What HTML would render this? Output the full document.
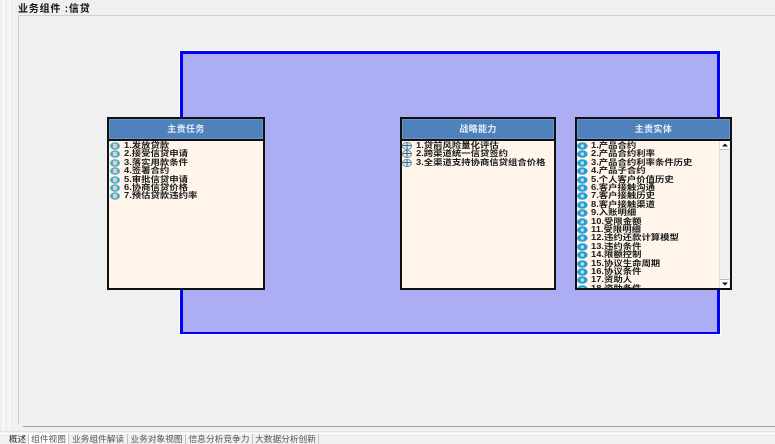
<!DOCTYPE html>
<html><head><meta charset="utf-8">
<style>
html,body{margin:0;padding:0;background:#f0f0f0;}
body{width:775px;height:444px;position:relative;overflow:hidden;font-family:"Liberation Sans","Noto Sans CJK SC",sans-serif;color:#111;}
.a{position:absolute;}
.title{left:18px;top:5px;font-size:10px;line-height:10px;font-weight:bold;white-space:nowrap;letter-spacing:.8px;filter:blur(.3px);}
.panel{position:absolute;top:117px;height:173px;box-sizing:border-box;border:2px solid #111;background:#fff5eb;overflow:hidden;}
.head{height:20px;background:#4f81bd;border-bottom:2px solid #111;color:#e8eef6;text-align:center;font-size:9px;line-height:20px;font-weight:bold;letter-spacing:.4px;box-shadow:inset 0 0 0 1px #6a94c8;}
.row{position:absolute;left:0;height:8.4px;width:100%;white-space:nowrap;font-size:8px;line-height:8.4px;font-weight:bold;color:#1a1a1a;}
.row svg{position:absolute;left:0;top:0;}
.row span{position:absolute;left:14px;top:0;transform:scaleX(1.17);transform-origin:0 50%;filter:blur(.25px);}
.p1 .row svg{left:1px;}
.p1 .row span{left:15px;}
.p3 .row span{left:13.5px;}
.sb{position:absolute;right:0;top:22px;width:10px;bottom:0;background:#f0f0f0;border-left:1px solid #ddd;}
.tab{position:absolute;top:434px;height:10px;box-sizing:border-box;font-size:8.7px;line-height:10px;text-align:center;color:#555;border-right:1px solid #c4c4c4;background:#f0f0f0;white-space:nowrap;filter:blur(.3px);}
</style></head>
<body>
<svg width="0" height="0" style="position:absolute"><defs>
<symbol id="t" viewBox="0 0 11 8"><ellipse cx="5" cy="4" rx="5" ry="3.8" fill="#45b2c9"/><rect x="3" y="1.8" width="4" height="4.2" fill="#efc4cb"/></symbol>
<symbol id="c" viewBox="0 0 11 8"><ellipse cx="5" cy="4" rx="4.6" ry="3.6" fill="#d4e6ef" stroke="#5a8aa0" stroke-width=".8"/><path d="M5 .5V7.5M1 3.5H9" stroke="#3c6a80" stroke-width="1"/></symbol>
<symbol id="e" viewBox="0 0 11 8"><ellipse cx="5.3" cy="4" rx="5.3" ry="3.8" fill="#2a9ed2"/><rect x="3.8" y="2.5" width="3" height="3" fill="#bfe4f2"/></symbol>
</defs></svg>

<div class="a" style="left:3px;top:0;width:1px;height:434px;background:#fff"></div>
<div class="a" style="left:9px;top:0;width:1px;height:430px;background:#fff"></div>
<div class="title a">业务组件 :信贷</div>
<div class="a" style="left:18px;top:15px;width:757px;height:1px;background:#cfcfcf"></div>
<div class="a" style="left:18px;top:15px;width:1px;height:409px;background:#cfcfcf"></div>
<div class="a" style="left:23px;top:426px;width:752px;height:1px;background:#a0a0a0"></div>
<div class="a" style="left:0;top:431px;width:775px;height:1px;background:#e2e2e2"></div>
<div class="a" style="left:0;top:433px;width:775px;height:1px;background:#fff"></div>

<div class="a" style="left:180px;top:51px;width:540px;height:283px;box-sizing:border-box;border:solid #0000f5;border-width:3px 3px 2px 3px;background:#adadf3;box-shadow:0 0 0 1px #fff"></div>

<div class="panel p1" style="left:107px;width:158px">
<div class="head">主责任务</div>
<div class="row" style="top:23px"><svg width="11" height="8"><use href="#t"/></svg><span>1.发放贷款</span></div>
<div class="row" style="top:31.4px"><svg width="11" height="8"><use href="#t"/></svg><span>2.接受信贷申请</span></div>
<div class="row" style="top:39.8px"><svg width="11" height="8"><use href="#t"/></svg><span>3.落实用款条件</span></div>
<div class="row" style="top:48.2px"><svg width="11" height="8"><use href="#t"/></svg><span>4.签署合约</span></div>
<div class="row" style="top:56.6px"><svg width="11" height="8"><use href="#t"/></svg><span>5.审批信贷申请</span></div>
<div class="row" style="top:65px"><svg width="11" height="8"><use href="#t"/></svg><span>6.协商信贷价格</span></div>
<div class="row" style="top:73.4px"><svg width="11" height="8"><use href="#t"/></svg><span>7.预估贷款违约率</span></div>
</div>

<div class="panel" style="left:400px;width:156px">
<div class="head">战略能力</div>
<div class="row" style="top:23px"><svg width="11" height="8"><use href="#c"/></svg><span>1.贷前风险量化评估</span></div>
<div class="row" style="top:31.4px"><svg width="11" height="8"><use href="#c"/></svg><span>2.跨渠道统一信贷签约</span></div>
<div class="row" style="top:39.8px"><svg width="11" height="8"><use href="#c"/></svg><span>3.全渠道支持协商信贷组合价格</span></div>
</div>

<div class="panel p3" style="left:575px;width:157px">
<div class="head">主责实体</div>
<div class="row" style="top:23px"><svg width="11" height="8"><use href="#e"/></svg><span>1.产品合约</span></div>
<div class="row" style="top:31.4px"><svg width="11" height="8"><use href="#e"/></svg><span>2.产品合约利率</span></div>
<div class="row" style="top:39.8px"><svg width="11" height="8"><use href="#e"/></svg><span>3.产品合约利率条件历史</span></div>
<div class="row" style="top:48.2px"><svg width="11" height="8"><use href="#e"/></svg><span>4.产品子合约</span></div>
<div class="row" style="top:56.6px"><svg width="11" height="8"><use href="#e"/></svg><span>5.个人客户价值历史</span></div>
<div class="row" style="top:65px"><svg width="11" height="8"><use href="#e"/></svg><span>6.客户接触沟通</span></div>
<div class="row" style="top:73.4px"><svg width="11" height="8"><use href="#e"/></svg><span>7.客户接触历史</span></div>
<div class="row" style="top:81.8px"><svg width="11" height="8"><use href="#e"/></svg><span>8.客户接触渠道</span></div>
<div class="row" style="top:90.2px"><svg width="11" height="8"><use href="#e"/></svg><span>9.入账明细</span></div>
<div class="row" style="top:98.6px"><svg width="11" height="8"><use href="#e"/></svg><span>10.受限金额</span></div>
<div class="row" style="top:107px"><svg width="11" height="8"><use href="#e"/></svg><span>11.受限明细</span></div>
<div class="row" style="top:115.4px"><svg width="11" height="8"><use href="#e"/></svg><span>12.违约还款计算模型</span></div>
<div class="row" style="top:123.8px"><svg width="11" height="8"><use href="#e"/></svg><span>13.违约条件</span></div>
<div class="row" style="top:132.2px"><svg width="11" height="8"><use href="#e"/></svg><span>14.限额控制</span></div>
<div class="row" style="top:140.6px"><svg width="11" height="8"><use href="#e"/></svg><span>15.协议生命周期</span></div>
<div class="row" style="top:149px"><svg width="11" height="8"><use href="#e"/></svg><span>16.协议条件</span></div>
<div class="row" style="top:157.4px"><svg width="11" height="8"><use href="#e"/></svg><span>17.资助人</span></div>
<div class="row" style="top:165.8px"><svg width="11" height="8"><use href="#e"/></svg><span>18.资助条件</span></div>
<div class="sb">
<div class="a" style="left:0;top:0;width:9px;height:8px;background:#fff;border-bottom:1px solid #bbb"></div>
<svg class="a" style="left:2px;top:2px" width="6" height="4"><path d="M0 3.5L3 .5L6 3.5Z" fill="#111"/></svg>
<div class="a" style="left:0;bottom:0;width:9px;height:8px;background:#fff;border-top:1px solid #bbb"></div>
<svg class="a" style="left:2px;bottom:2px" width="6" height="4"><path d="M0 .5L3 3.5L6 .5Z" fill="#111"/></svg>
</div>
</div>

<div class="tab" style="left:7px;width:22px;color:#333">概述</div>
<div class="tab" style="left:29px;width:40px;background:#fff">组件视图</div>
<div class="tab" style="left:69px;width:59px">业务组件解读</div>
<div class="tab" style="left:128px;width:58px">业务对象视图</div>
<div class="tab" style="left:186px;width:67px">信息分析竞争力</div>
<div class="tab" style="left:253px;width:66px">大数据分析创新</div>
</body></html>
